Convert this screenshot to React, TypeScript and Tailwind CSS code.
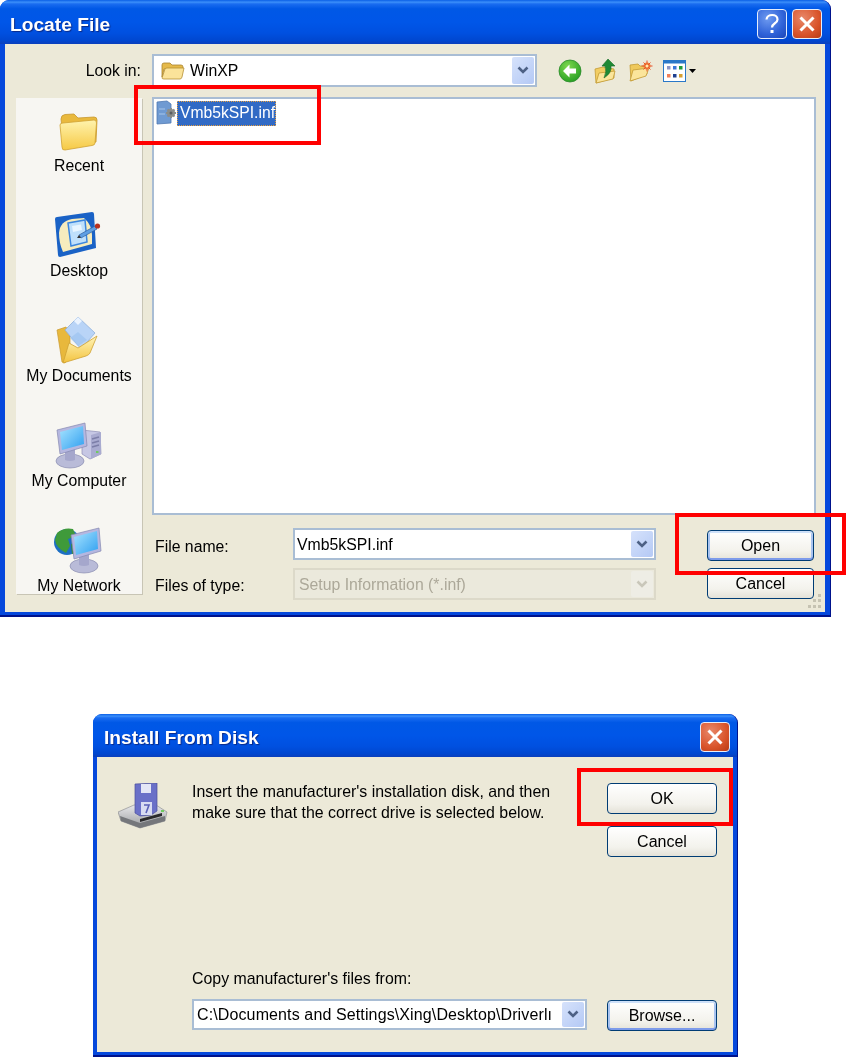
import type { ReactNode } from "react";

const titleGradient =
  "bg-[linear-gradient(180deg,#0a5fe6_0%,#3b8ffa_5%,#1a6cf0_9%,#0058e6_20%,#0056e8_50%,#0050e0_75%,#0047d0_92%,#0a3fbc_100%)]";

function Chevron({ color = "#4d6185" }: { color?: string }) {
  return (
    <svg width="12" height="9" viewBox="0 0 12 9">
      <path d="M1.5 1.5 L6 6 L10.5 1.5" fill="none" stroke={color} strokeWidth="2.6" />
    </svg>
  );
}

function ComboArrow({ disabled = false }: { disabled?: boolean }) {
  return (
    <div
      className={
        disabled
          ? "flex h-full w-[22px] items-center justify-center rounded-[2px] bg-[#eeede5]"
          : "flex h-full w-[22px] items-center justify-center rounded-[2px] bg-[linear-gradient(135deg,#d6e2fb,#b4c9f5)]"
      }
    >
      <Chevron color={disabled ? "#c9c7ba" : "#4d6185"} />
    </div>
  );
}

function XpButton({ label, primary = false }: { label: string; primary?: boolean }) {
  return (
    <div
      className={
        primary
          ? "flex h-[31px] w-full items-center justify-center rounded-[4px] border border-[#003c74] bg-[linear-gradient(180deg,#ffffff,#f3f2ec_70%,#e4e2d8)] text-[16px] text-black shadow-[inset_0_2px_0_#cee0f8,inset_0_-2px_0_#7d9bea,inset_2px_0_0_#a9c4f0,inset_-2px_0_0_#a9c4f0]"
          : "flex h-[31px] w-full items-center justify-center rounded-[4px] border border-[#003c74] bg-[linear-gradient(180deg,#ffffff,#f3f2ec_70%,#e4e2d8)] text-[16px] text-black"
      }
    >
      {label}
    </div>
  );
}

function CloseButton() {
  return (
    <div className="flex h-[30px] w-[30px] items-center justify-center rounded-[4px] border border-[#e6eefc] bg-[radial-gradient(circle_at_35%_30%,#e8886a,#d9542b_60%,#b83a14)]">
      <svg width="18" height="18" viewBox="0 0 18 18">
        <path d="M2.5 2.5 L15.5 15.5 M15.5 2.5 L2.5 15.5" stroke="#ffffff" strokeWidth="3" />
      </svg>
    </div>
  );
}

function HelpButton() {
  return (
    <div className="flex h-[30px] w-[30px] items-center justify-center rounded-[4px] border border-[#e6eefc] bg-[radial-gradient(circle_at_35%_30%,#6f9bf0,#2f62d8_60%,#1c46b8)]">
      <svg width="18" height="22" viewBox="0 0 18 22">
        <path d="M3.5 6.5 C4 0.5 14.5 0.5 14.5 6.5 C14.5 10.5 9 10 9 14.5" fill="none" stroke="#ffffff" strokeWidth="2.2" />
        <rect x="7.5" y="17" width="3" height="3" fill="#ffffff" />
      </svg>
    </div>
  );
}

function BigFolder() {
  return (
    <svg width="50" height="50" viewBox="0 0 50 50">
      <defs>
        <linearGradient id="bf" x1="0" y1="0" x2="0" y2="1">
          <stop offset="0" stopColor="#fff3ae" />
          <stop offset="1" stopColor="#f6c945" />
        </linearGradient>
      </defs>
      <path d="M7 13 Q7 9 11 8.5 L20 8 L24 12 L40 11 Q43 11 43 14 L42 36 L10 43 Z" fill="#e9b93d" stroke="#c8982e" strokeWidth="0.8" />
      <path d="M6 19 Q6 17 9 17 L40 14 Q42.5 14 42.5 17 L41 37 Q41 39 38 39.5 L11 44 Q8 44.5 8 41 Z" fill="url(#bf)" stroke="#cfa233" strokeWidth="0.8" />
    </svg>
  );
}

function DesktopIcon() {
  return (
    <svg width="50" height="50" viewBox="0 0 50 50">
      <path d="M1 8 Q1 6 3 6 L38 1 Q40 1 40 3 L42 37 L6 46 Q4 46 4 44 Z" fill="#1a62c6" />
      <path d="M5 22 Q6 10 18 8 L30 7 Q38 14 38 24 L38 33 L9 41 Q5 32 5 22 Z" fill="#f6ecbe" />
      <path d="M14 12 L31 9 L33 31 L17 35 Z" fill="#bfe0fb" stroke="#3b86de" strokeWidth="1.5" />
      <path d="M18 15 L27 13.5 L28 19 L19 21 Z" fill="#e8f5ff" />
      <path d="M25 24 L41 15 L43 18 L27 27 Z" fill="#5f9fe3" stroke="#2c5f9f" strokeWidth="0.7" />
      <path d="M25 24 L27 27 L23 27 Z" fill="#333333" />
      <circle cx="43.5" cy="15" r="2.6" fill="#b8321e" />
    </svg>
  );
}

function DocsIcon() {
  return (
    <svg width="50" height="50" viewBox="0 0 50 50">
      <defs>
        <linearGradient id="df" x1="0" y1="0" x2="0" y2="1">
          <stop offset="0" stopColor="#fff4b8" />
          <stop offset="1" stopColor="#f3c33f" />
        </linearGradient>
      </defs>
      <path d="M3 14 L12 11 L16 18 L16 40 L11 47 L8 46 Z" fill="#e8b83c" stroke="#c8982e" strokeWidth="0.7" />
      <path d="M11 14 L24 1 L41 17 L27 33 Z" fill="#b9d4f7" stroke="#8fb0dc" strokeWidth="0.8" />
      <path d="M20 5 L24 1 L28 5 L24 9 Z" fill="#eaf3ff" />
      <path d="M16 22 L24 16 L33 24 L24 30 Z" fill="#9cc3f0" opacity="0.7" />
      <path d="M9 47 L15 27 L24 32 L43 20 L36 37 Q35 39 32 40 Z" fill="url(#df)" stroke="#cfa233" strokeWidth="0.8" />
    </svg>
  );
}

function Monitor({ id, x, y }: { id: string; x: number; y: number }) {
  return (
    <g transform={`translate(${x} ${y})`}>
      <defs>
        <linearGradient id={id} x1="0" y1="0" x2="1" y2="1">
          <stop offset="0" stopColor="#a8e4ff" />
          <stop offset="1" stopColor="#2f9ff0" />
        </linearGradient>
      </defs>
      <ellipse cx="16" cy="38" rx="14" ry="7" fill="#b9bbd8" stroke="#8a8cb0" strokeWidth="0.7" />
      <path d="M11 26 L21 24 L21 37 Q16 39 11 37 Z" fill="#a5a7cc" />
      <path d="M3 7 L31 0 L33 23 L6 31 Z" fill="#b5b7e0" stroke="#8588b0" strokeWidth="0.7" />
      <path d="M6 9 L29 3 L30 21 L8 27 Z" fill={`url(#${id})`} />
    </g>
  );
}

function ComputerIcon() {
  return (
    <svg width="50" height="50" viewBox="0 0 50 50">
      <path d="M28 9 L46 11 L47 33 L36 38 L28 33 Z" fill="#c6c7e4" stroke="#8c8eb6" strokeWidth="0.7" />
      <path d="M37 14 L47 11 L47 33 L37 38 Z" fill="#a9abd0" />
      <path d="M38 18 L45 16 M38 22 L45 20 M38 26 L45 24" stroke="#7c7ea8" strokeWidth="1.5" />
      <rect x="42" y="30" width="2.5" height="2" fill="#6fcb5f" />
      <Monitor id="cm" x={0} y={2} />
    </svg>
  );
}

function NetworkIcon() {
  return (
    <svg width="50" height="50" viewBox="0 0 50 50">
      <circle cx="13" cy="16" r="13" fill="#1d6fc4" />
      <path d="M3 7 Q10 1 19 3 L22 10 L14 13 L16 20 L12 27 Q2 22 1 14 Z" fill="#3f9a3a" />
      <path d="M17 18 L24 16 L23 27 L18 28 Z" fill="#2f8a32" />
      <Monitor id="nm" x={14} y={2} />
    </svg>
  );
}

function SmallFolder() {
  return (
    <svg width="24" height="20" viewBox="0 0 24 20">
      <path d="M1 4 Q1 2 3 2 L9 2 L11 4 L20 4 Q22 4 22 6 L22 8 L3 8 L1 16 Z" fill="#e5b94a" stroke="#a9842e" strokeWidth="0.8" />
      <path d="M1 17 L4 8 Q4.5 7 6 7 L23 7 L21 16 Q20.5 18 19 18 L3 18 Q1 18 1 17 Z" fill="#fbe39a" stroke="#b58f33" strokeWidth="0.8" />
    </svg>
  );
}

function InfIcon() {
  return (
    <svg width="22" height="26" viewBox="0 0 22 26">
      <path d="M1 2 L11 1 L15 4 L15 23 L1 24 Z" fill="#6f9ad2" stroke="#4f79b3" strokeWidth="0.8" />
      <path d="M3 9 L9 9 M3 14 L9 14" stroke="#a8c6ea" strokeWidth="1.2" />
      <path d="M15 8 L15 18 M10 13 L20 13 M11.5 9.5 L18.5 16.5 M18.5 9.5 L11.5 16.5" stroke="#8b8d8a" strokeWidth="2" />
      <circle cx="15" cy="13" r="4" fill="#8b8d8a" />
      <circle cx="15" cy="13" r="1.5" fill="#5c5f60" />
    </svg>
  );
}

function BackIcon() {
  return (
    <svg width="24" height="24" viewBox="0 0 24 24">
      <defs>
        <radialGradient id="bk" cx="0.4" cy="0.3" r="0.8">
          <stop offset="0" stopColor="#7fd84f" />
          <stop offset="1" stopColor="#1e9a1e" />
        </radialGradient>
      </defs>
      <circle cx="12" cy="12" r="11" fill="url(#bk)" stroke="#2c8a2c" strokeWidth="0.8" />
      <path d="M11.5 5.5 L5 12 L11.5 18.5 L11.5 14.5 L18 14.5 L18 9.5 L11.5 9.5 Z" fill="#ffffff" />
    </svg>
  );
}

function UpIcon() {
  return (
    <svg width="22" height="26" viewBox="0 0 22 26">
      <path d="M1 11 L9 9 L20 11 L20 20 L2 25 Z" fill="#f2cd62" stroke="#c39a33" strokeWidth="0.8" />
      <path d="M2 25 L5 15 L21 13 L19 21 Z" fill="#fbe59b" stroke="#c39a33" strokeWidth="0.8" />
      <path d="M14 1 L21 8 L17 8 Q18 15 10 20 Q13 13 11 8 L8 8 Z" fill="#1f8a35" stroke="#156b27" strokeWidth="0.6" />
    </svg>
  );
}

function NewFolderIcon() {
  return (
    <svg width="24" height="22" viewBox="0 0 24 22">
      <path d="M1 5 L9 4 L11 6 L18 6 L18 14 L2 21 Z" fill="#efc95c" stroke="#c39a33" strokeWidth="0.8" />
      <path d="M1 21 L4 10 L20 8 L17 16 Z" fill="#fbe59b" stroke="#c39a33" strokeWidth="0.8" />
      <circle cx="18" cy="6" r="3.5" fill="#f0883a" />
      <path d="M18 0.5 L18 11.5 M12.5 6 L23.5 6 M14.5 2.5 L21.5 9.5 M21.5 2.5 L14.5 9.5" stroke="#e8502c" strokeWidth="1" />
      <circle cx="18" cy="6" r="1.5" fill="#ffe9a8" />
    </svg>
  );
}

function ViewsIcon() {
  return (
    <svg width="34" height="22" viewBox="0 0 34 22">
      <rect x="0.5" y="0.5" width="22" height="21" fill="#ffffff" stroke="#2a78c8" />
      <rect x="0.5" y="0.5" width="22" height="3" fill="#2a78c8" />
      <rect x="4" y="6" width="3.5" height="3.5" fill="#8d96c6" />
      <rect x="10" y="6" width="3.5" height="3.5" fill="#3a78d8" />
      <rect x="16" y="6" width="3.5" height="3.5" fill="#1f9a3a" />
      <rect x="4" y="14" width="3.5" height="3.5" fill="#f0805a" />
      <rect x="10" y="14" width="3.5" height="3.5" fill="#1f3f8f" />
      <rect x="16" y="14" width="3.5" height="3.5" fill="#d8a030" />
      <path d="M26 9 L33 9 L29.5 13 Z" fill="#000000" />
    </svg>
  );
}

function DiskIcon() {
  return (
    <svg width="50" height="46" viewBox="0 0 50 46">
      <defs>
        <linearGradient id="dr" x1="0" y1="0" x2="0" y2="1">
          <stop offset="0" stopColor="#e8e8ea" />
          <stop offset="1" stopColor="#9a9c9f" />
        </linearGradient>
      </defs>
      <path d="M0 29 L16 22 L38 22 L49 29 L47 38 L22 45 L3 38 Z" fill="url(#dr)" stroke="#85878a" strokeWidth="0.6" />
      <path d="M3 38 L22 45 L47 38 L47 33 L22 40 L2 33 Z" fill="#75777b" />
      <path d="M22 39 L44 33 L44 30 L22 36 Z" fill="#2a2a2c" />
      <rect x="43" y="27" width="3" height="2" fill="#6fcb5f" />
      <path d="M17 1 L39 0 L39 28 L33 32 L22 33 L17 30 Z" fill="#6a70c8" stroke="#4a4f9c" strokeWidth="0.7" />
      <rect x="23" y="1" width="10" height="9" fill="#e4e6f6" />
      <rect x="23" y="19" width="11" height="13" fill="#d8dbf2" />
      <path d="M26 22 L31 22 L28 30" fill="none" stroke="#5a60b8" strokeWidth="1.6" />
    </svg>
  );
}

function RedBox({ className }: { className: string }) {
  return <div className={`absolute border-[4px] border-[#ff0000] ${className}`} />;
}

function Place({ icon, label }: { icon: ReactNode; label: string }) {
  return (
    <div className="flex h-[105px] shrink-0 flex-col items-center pt-[8px]">
      <div className="flex h-[50px] w-[50px]">{icon}</div>
      <div className="whitespace-nowrap text-[15.8px] leading-[20px] text-black">{label}</div>
    </div>
  );
}

function Grip() {
  return (
    <svg width="16" height="17" viewBox="0 0 16 17" className="absolute bottom-[6px] right-[8px]">
      <g fill="#c6c3b2">
        <rect x="12" y="2" width="3" height="3" />
        <rect x="7" y="7" width="3" height="3" />
        <rect x="12" y="7" width="3" height="3" />
        <rect x="2" y="13" width="3" height="3" />
        <rect x="7" y="13" width="3" height="3" />
        <rect x="12" y="13" width="3" height="3" />
      </g>
    </svg>
  );
}

function LocateDialog() {
  return (
    <div className="relative flex h-[617px] w-[831px] flex-col rounded-t-[9px] border-r border-b-2 border-r-[#00138c] border-b-[#00138c] bg-[#0548dc]">
      <div className={`flex h-[44px] shrink-0 items-center justify-between rounded-t-[9px] pl-[10px] pr-[8px] ${titleGradient}`}>
        <div className="pt-[6px] text-[19.2px] font-bold text-white [text-shadow:1px_1px_1px_#0a2a88]">Locate File</div>
        <div className="flex gap-[5px] pt-[3px]">
          <HelpButton />
          <CloseButton />
        </div>
      </div>
      <div className="mx-[5px] mb-[3px] flex flex-1 flex-col bg-[#ece9d8] pt-[10px]">
        <div className="flex h-[33px] items-center">
          <div className="w-[136px] text-right text-[15.8px] text-black">Look in:</div>
          <div className="ml-[11px] flex h-[33px] w-[385px] items-center border-2 border-[#a9bdd4] bg-white pl-[7px] pr-[1px]">
            <SmallFolder />
            <div className="ml-[5px] flex-1 text-[15.8px] text-black">WinXP</div>
            <div className="h-[27px]">
              <ComboArrow />
            </div>
          </div>
          <div className="ml-[21px] flex items-center">
            <BackIcon />
            <div className="ml-[12px]"><UpIcon /></div>
            <div className="ml-[13px]"><NewFolderIcon /></div>
            <div className="ml-[10px]"><ViewsIcon /></div>
          </div>
        </div>
        <div className="mt-[10px] flex">
          <div className="ml-[11px] mt-[1px] flex h-[496px] w-[126px] flex-col overflow-hidden bg-[#f7f6f2] shadow-[1px_1px_0_#c8c5b5]">
            <Place icon={<BigFolder />} label="Recent" />
            <Place icon={<DesktopIcon />} label="Desktop" />
            <Place icon={<DocsIcon />} label="My Documents" />
            <Place icon={<ComputerIcon />} label="My Computer" />
            <Place icon={<NetworkIcon />} label="My Network" />
          </div>
          <div className="ml-[10px] flex w-[664px] flex-col">
            <div className="h-[418px] border-2 border-[#a9bdd4] bg-white pl-[2px] pt-[1px]">
              <div className="flex items-center">
                <InfIcon />
                <div className="-ml-[1px] flex h-[25px] w-[99px] items-center border border-dotted border-[#e8a040] bg-[#316ac5] pl-[2px] text-[15.7px] text-white">
                  Vmb5kSPI.inf
                </div>
              </div>
            </div>
            <div className="mt-[13px] flex h-[32px] items-center">
              <div className="ml-[3px] w-[138px] pt-[5px] text-[15.8px] text-black">File name:</div>
              <div className="flex h-[32px] w-[363px] items-center border-2 border-[#a9bdd4] bg-white pl-[2px] pr-[1px] text-[15.8px] text-black">
                <div className="flex-1 pt-[1px]">Vmb5kSPI.inf</div>
                <div className="h-[26px]">
                  <ComboArrow />
                </div>
              </div>
              <div className="ml-[51px] mt-[3px] w-[107px]">
                <XpButton label="Open" primary />
              </div>
            </div>
            <div className="mt-[8px] flex h-[32px] items-center">
              <div className="ml-[3px] w-[138px] pt-[3px] text-[15.8px] text-black">Files of type:</div>
              <div className="flex h-[32px] w-[363px] items-center border-2 border-[#dcd9c9] bg-[#ebe9dc] pl-[4px] pr-[1px] text-[15.8px] text-[#aca899]">
                <div className="flex-1 pt-[2px]">Setup Information (*.inf)</div>
                <div className="h-[26px]">
                  <ComboArrow disabled />
                </div>
              </div>
              <div className="ml-[51px] -mt-[1px] w-[107px]">
                <XpButton label="Cancel" />
              </div>
            </div>
          </div>
        </div>
      </div>
      <Grip />
      <RedBox className="left-[134px] top-[85px] h-[60px] w-[187px]" />
    </div>
  );
}

function InstallDialog() {
  return (
    <div className="relative ml-[93px] mt-[97px] flex h-[343px] w-[645px] flex-col rounded-t-[9px] border-r border-b-2 border-r-[#00138c] border-b-[#00138c] bg-[#0548dc]">
      <div className={`flex h-[43px] shrink-0 items-center justify-between rounded-t-[9px] pl-[11px] pr-[7px] ${titleGradient}`}>
        <div className="pt-[5px] text-[19.2px] font-bold text-white [text-shadow:1px_1px_1px_#0a2a88]">Install From Disk</div>
        <div className="pt-[3px]">
          <CloseButton />
        </div>
      </div>
      <div className="mx-[4px] mb-[3px] flex flex-1 flex-col justify-between bg-[#ece9d8]">
        <div className="flex pt-[24px]">
          <div className="ml-[21px] mt-[2px]">
            <DiskIcon />
          </div>
          <div className="ml-[24px] w-[415px] text-[15.9px] leading-[21px] text-black">
            Insert the manufacturer's installation disk, and then
            <br />
            make sure that the correct drive is selected below.
          </div>
          <div className="mt-[2px] flex w-[110px] flex-col gap-[12px]">
            <XpButton label="OK" />
            <XpButton label="Cancel" />
          </div>
        </div>
        <div className="mb-[21px] pl-[95px]">
          <div className="text-[15.9px] leading-[20px] text-black">Copy manufacturer's files from:</div>
          <div className="mt-[9px] flex items-center">
            <div className="flex h-[31px] w-[395px] items-center border-2 border-[#a9bdd4] bg-white pl-[3px] pr-[1px] text-[16px] text-black">
              <div className="flex-1 whitespace-nowrap tracking-[0.12px]">C:\Documents and Settings\Xing\Desktop\Driverlı</div>
              <div className="h-[25px] shrink-0">
                <ComboArrow />
              </div>
            </div>
            <div className="ml-[20px] mt-[2px] w-[110px]">
              <XpButton label="Browse..." primary />
            </div>
          </div>
        </div>
      </div>
      <RedBox className="left-[484px] top-[54px] h-[58px] w-[156px]" />
    </div>
  );
}

export default function App() {
  return (
    <div className="relative h-[1057px] w-[846px] overflow-hidden bg-white font-['Liberation_Sans',sans-serif] blur-[0.4px]">
      <LocateDialog />
      <InstallDialog />
      <RedBox className="left-[675px] top-[513px] h-[62px] w-[171px]" />
    </div>
  );
}
